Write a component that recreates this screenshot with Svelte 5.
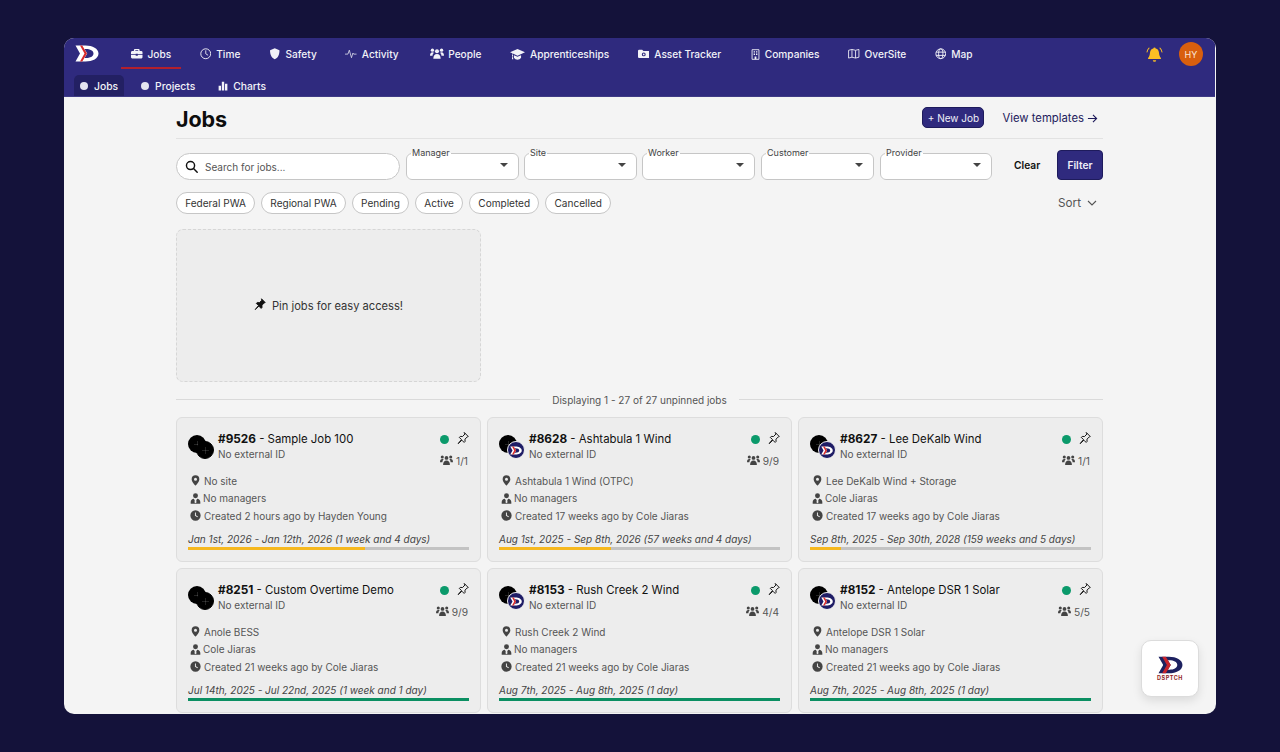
<script>
  const nav = [
    { label: 'Jobs', icon: 'briefcase', active: true },
    { label: 'Time', icon: 'clock' },
    { label: 'Safety', icon: 'shield' },
    { label: 'Activity', icon: 'activity' },
    { label: 'People', icon: 'people' },
    { label: 'Apprenticeships', icon: 'cap' },
    { label: 'Asset Tracker', icon: 'folder' },
    { label: 'Companies', icon: 'building' },
    { label: 'OverSite', icon: 'map' },
    { label: 'Map', icon: 'globe' }
  ];
  const filters = ['Manager', 'Site', 'Worker', 'Customer', 'Provider'];
  const chips = ['Federal PWA', 'Regional PWA', 'Pending', 'Active', 'Completed', 'Cancelled'];
  const jobs = [
    { id: '#9526', name: 'Sample Job 100', crew: '1/1', site: 'No site', mgr: 'No managers', created: 'Created 2 hours ago by Hayden Young', dates: 'Jan 1st, 2026 - Jan 12th, 2026 (1 week and 4 days)', pct: 63, color: '#f6b81f', logo: false },
    { id: '#8628', name: 'Ashtabula 1 Wind', crew: '9/9', site: 'Ashtabula 1 Wind (OTPC)', mgr: 'No managers', created: 'Created 17 weeks ago by Cole Jiaras', dates: 'Aug 1st, 2025 - Sep 8th, 2026 (57 weeks and 4 days)', pct: 40, color: '#f6b81f', logo: true },
    { id: '#8627', name: 'Lee DeKalb Wind', crew: '1/1', site: 'Lee DeKalb Wind + Storage', mgr: 'Cole Jiaras', created: 'Created 17 weeks ago by Cole Jiaras', dates: 'Sep 8th, 2025 - Sep 30th, 2028 (159 weeks and 5 days)', pct: 11, color: '#f6b81f', logo: true },
    { id: '#8251', name: 'Custom Overtime Demo', crew: '9/9', site: 'Anole BESS', mgr: 'Cole Jiaras', created: 'Created 21 weeks ago by Cole Jiaras', dates: 'Jul 14th, 2025 - Jul 22nd, 2025 (1 week and 1 day)', pct: 100, color: '#0b8f62', logo: false },
    { id: '#8153', name: 'Rush Creek 2 Wind', crew: '4/4', site: 'Rush Creek 2 Wind', mgr: 'No managers', created: 'Created 21 weeks ago by Cole Jiaras', dates: 'Aug 7th, 2025 - Aug 8th, 2025 (1 day)', pct: 100, color: '#0b8f62', logo: true },
    { id: '#8152', name: 'Antelope DSR 1 Solar', crew: '5/5', site: 'Antelope DSR 1 Solar', mgr: 'No managers', created: 'Created 21 weeks ago by Cole Jiaras', dates: 'Aug 7th, 2025 - Aug 8th, 2025 (1 day)', pct: 100, color: '#0b8f62', logo: true }
  ];
</script>

{#snippet icon(name)}
  <svg class="ico i-{name}" viewBox="0 0 16 16" aria-hidden="true">
    {#if name === 'briefcase'}
      <path fill="currentColor" d="M5.500 1.500h5A1.500 1.500 0 0 1 12 3v1h2a2 2 0 0 1 2 2v2.600H9.500V8h-3v.6H0V6a2 2 0 0 1 2-2h2V3a1.500 1.500 0 0 1 1.500-1.500zM6 3v1h4V3zM0 9.800h6.500v1h3v-1H16V13a1.500 1.500 0 0 1-1.500 1.500h-13A1.500 1.500 0 0 1 0 13z"/>
    {:else if name === 'clock'}
      <circle cx="8" cy="8" r="6.900" fill="none" stroke="currentColor" stroke-width="1.300"/><path d="M8 3.800V8l2.800 1.800" fill="none" stroke="currentColor" stroke-width="1.200" stroke-linecap="round"/>
    {:else if name === 'shield'}
      <path fill="currentColor" d="M8 .5 14.500 3c.2 5.500-1.400 10-6.500 12.500C2.900 13 1.300 8.500 1.500 3z"/>
    {:else if name === 'activity'}
      <path d="M.5 8.500h3.500L6 3l3 10.500L11 7l1 1.500h3.500" fill="none" stroke="currentColor" stroke-width="1" stroke-linejoin="round" stroke-linecap="round"/>
    {:else if name === 'people'}
      <g fill="currentColor"><circle cx="8" cy="4.800" r="2.300"/><circle cx="2.800" cy="3.600" r="1.900"/><circle cx="13.200" cy="3.600" r="1.900"/><path d="M3.800 13.500c0-3.600 1.600-5.500 4.200-5.500s4.200 1.900 4.200 5.500zM0 10C0 7.400 1 6 2.800 6c.7 0 1.300.2 1.700.6-1 1-1.500 2-1.600 3.400H0zM16 10c0-2.600-1-4-2.800-4-.7 0-1.300.2-1.700.6 1 1 1.500 2 1.600 3.400H16z"/></g>
    {:else if name === 'cap'}
      <path fill="currentColor" d="M8 2 0 5.500l2.500 1.200v1.900c-.5.3-.5 1 0 1.300L2 13h1.500l-.5-3.100c.5-.3.500-1 0-1.300V7l5 2.300 8-3.800zM4.200 8.700v2.700C5 12.700 6.500 13.500 8 13.500s3-.8 3.800-2.100V8.700L8 10.500z"/>
    {:else if name === 'folder'}
      <path fill="currentColor" fill-rule="evenodd" d="M1.500 2.500h4.300L7.500 4h7A1.500 1.500 0 0 1 16 5.500v7a1.500 1.500 0 0 1-1.500 1.500h-13A1.500 1.500 0 0 1 0 12.500V4a1.500 1.500 0 0 1 1.500-1.500zM8 6.200a2.700 2.700 0 1 0 0 5.400 2.700 2.700 0 0 0 0-5.400zm0 1.500a1.200 1.200 0 1 1 0 2.400 1.200 1.200 0 0 1 0-2.400z"/>
    {:else if name === 'building'}
      <path fill="none" stroke="currentColor" stroke-width="1.300" d="M3 1h10v14H3z"/><path fill="currentColor" d="M5.300 3.200h2v2h-2zM8.700 3.200h2v2h-2zM5.300 6.600h2v2h-2zM8.700 6.600h2v2h-2zM6.700 11h2.600v4H6.700z"/>
    {:else if name === 'map'}
      <path fill="none" stroke="currentColor" stroke-width="1.200" stroke-linejoin="round" d="M.8 3.200 5.500 2l5 1.200 4.700-1.200v10.800L10.500 14l-5-1.200L.8 14zM5.500 2v10.800M10.500 3.200V14"/>
    {:else if name === 'globe'}
      <g fill="none" stroke="currentColor" stroke-width="1.300"><circle cx="8" cy="8" r="6.800"/><ellipse cx="8" cy="8" rx="3" ry="6.800"/><path d="M1.500 5.700h13M1.500 10.300h13"/></g>
    {:else if name === 'pin'}
      <path fill="none" stroke="currentColor" stroke-width="1.300" stroke-linejoin="round" stroke-linecap="round" d="M10 1l5 5-1.300.5-3 3 .0 3.200-1.200 1.200-3-3-5 4.600L6 10 3 7.200l1.300-1.300 3.100.1 2.900-3z"/>
    {:else if name === 'pinSolid'}
      <path fill="currentColor" stroke="currentColor" stroke-width="1.100" stroke-linejoin="round" d="M10 1l5 5-1.300.5-3 3 .0 3.200-1.200 1.200-3-3-5 4.600L6 10 3 7.200l1.300-1.300 3.100.1 2.900-3z"/>
    {:else if name === 'marker'}
      <path fill="currentColor" fill-rule="evenodd" d="M8 .5a5.600 5.600 0 0 1 5.600 5.600C13.600 10 8 15.500 8 15.500S2.400 10 2.400 6.100A5.600 5.600 0 0 1 8 .5zm0 3.400a2.200 2.200 0 1 0 0 4.400 2.200 2.200 0 0 0 0-4.400z"/>
    {:else if name === 'tie'}
      <path fill="currentColor" d="M8 .5a3.600 3.600 0 1 1 0 7.200A3.600 3.600 0 0 1 8 .5zM1 15.500v-2.300C1 10.400 3 8.600 5.700 8.500L7 11.300l-.6 2.200L8 15l1.600-1.500-.6-2.200 1.300-2.800c2.700.1 4.700 1.900 4.700 4.700v2.300z"/>
    {:else if name === 'clockSolid'}
      <path fill="currentColor" fill-rule="evenodd" d="M8 .5a7.500 7.500 0 1 1 0 15 7.500 7.500 0 0 1 0-15zM7.200 3.500v5l3.600 2.200.8-1.200-3-1.800V3.500z"/>
    {:else if name === 'search'}
      <g fill="none" stroke="currentColor" stroke-width="1.800"><circle cx="6.800" cy="6.800" r="5"/><path d="m10.500 10.500 4.500 4.500" stroke-linecap="round"/></g>
    {:else if name === 'chart'}
      <path fill="currentColor" d="M1 7.500h3.800V15H1zM6.100 1h3.800v14H6.100zM11.200 4.500H15V15h-3.800z"/>
    {/if}
  </svg>
{/snippet}

{#snippet logoMark(main, chev, thin)}
  <svg class="logo" viewBox="0 0 48 34" aria-hidden="true">
    <path fill={main} d="M1 1h20c14 0 26 6 26 16S35 33 21 33H1l9-16zm18 7 5.500 9L19 26h3c8 0 15-3 15-9s-7-9-15-9z"/>
    {#if thin}
      <path fill={chev} d="M10 1h4.500l9.500 16-9.500 16H10l9-16z"/>
    {:else}
      <path fill={chev} d="M8 1h7l9.500 16L15 33H8l9-16z"/>
    {/if}
  </svg>
{/snippet}

<div class="window">
  <header>
    <div class="top">
      <span class="brand">{@render logoMark('#ffffff', '#d62b2b', true)}</span>
      <nav>
        {#each nav as item}
          <span class="nav-item" class:active={item.active}>{@render icon(item.icon)}{item.label}</span>
        {/each}
      </nav>
      <div class="right">
        <svg class="bell" viewBox="0 0 18 18" aria-hidden="true">
          <path fill="#fbbf24" d="M9 1.500a1.200 1.200 0 0 1 1.200 1.200c2.400.5 3.400 2.400 3.600 4.800.2 2.400.8 3.800 2 5.200v1H2.200v-1c1.200-1.400 1.800-2.800 2-5.200.2-2.400 1.200-4.300 3.600-4.800A1.200 1.200 0 0 1 9 1.500zM7.200 15h3.600a1.800 1.800 0 0 1-3.600 0z"/>
          <path fill="none" stroke="#fbbf24" stroke-width="1.100" stroke-linecap="round" d="M3.200 2.200C2 3.300 1.300 4.700 1.100 6.300M14.800 2.200c1.200 1.100 1.900 2.500 2.100 4.100"/>
        </svg>
        <span class="avatar">HY</span>
      </div>
    </div>
    <div class="sub">
      <span class="tab current"><i class="dot"></i>Jobs</span>
      <span class="tab"><i class="dot"></i>Projects</span>
      <span class="tab">{@render icon('chart')}Charts</span>
    </div>
  </header>

  <main>
    <div class="title-row">
      <h1>Jobs</h1>
      <div class="title-actions">
        <button class="new">+ New Job</button>
        <span class="templates">View templates
          <svg viewBox="0 0 12 12" aria-hidden="true"><path d="M1 6h9.500M6.500 2l4 4-4 4" fill="none" stroke="currentColor" stroke-width="1.200"/></svg>
        </span>
      </div>
    </div>

    <div class="filter-row">
      <div class="search">{@render icon('search')}<span>Search for jobs...</span></div>
      {#each filters as f}
        <fieldset class="select"><legend>{f}</legend><i class="caret"></i></fieldset>
      {/each}
      <span class="clear">Clear</span>
      <button class="apply">Filter</button>
    </div>

    <div class="chip-row">
      {#each chips as c}<span class="chip">{c}</span>{/each}
      <span class="sort">Sort
        <svg viewBox="0 0 12 12" aria-hidden="true"><path d="m2 4 4 4 4-4" fill="none" stroke="currentColor" stroke-width="1.100"/></svg>
      </span>
    </div>

    <div class="pin-grid">
      <div class="pin-box">{@render icon('pinSolid')}<span>Pin jobs for easy access!</span></div>
    </div>

    <div class="sep"><span>Displaying 1 - 27 of 27 unpinned jobs</span></div>

    <div class="cards">
      {#each jobs as j}
        <article>
          <div class="head">
            <div class="avatars">
              <i class="av black"></i>
              {#if j.logo}
                <i class="av second blue">{@render logoMark('#ffffff', '#d62b2b', false)}</i>
              {:else}
                <i class="av second black"></i>
              {/if}
            </div>
            <div class="names">
              <div class="name"><b>{j.id}</b> - {j.name}</div>
              <div class="ext">No external ID</div>
            </div>
            <div class="status">
              <div class="status-top"><i class="live"></i>{@render icon('pin')}</div>
              <div class="crew">{@render icon('people')}{j.crew}</div>
            </div>
          </div>
          <div class="rows">
            <div class="row">{@render icon('marker')}{j.site}</div>
            <div class="row tight">{@render icon('tie')}{j.mgr}</div>
            <div class="row">{@render icon('clockSolid')}{j.created}</div>
          </div>
          <div class="dates">{j.dates}</div>
          <div class="bar"><div class="fill" style="width:{j.pct}%;background:{j.color}"></div></div>
        </article>
      {/each}
    </div>
  </main>

  <div class="float">
    {@render logoMark('#1d2160', '#c8232c', false)}
    <span>DSPTCH</span>
  </div>
</div>

<style>
  :global(body) {
    margin: 0;
    background: #14123a;
    font-family: Inter, "Liberation Sans", sans-serif;
  }
  .window {
    position: relative;
    width: 1152px;
    height: 676px;
    margin: 38px 64px;
    background: #f4f4f4;
    border-radius: 10px;
    overflow: hidden;
  }
  header {
    height: 59px;
    background: #2f2a7e;
    color: #f2f2f8;
    margin-right: 1px;
    border-bottom: 1px solid #3f3b85;
    box-sizing: border-box;
  }
  .top {
    display: flex;
    align-items: flex-start;
    height: 37px;
    padding-left: 11px;
  }
  .brand { width: 24px; height: 17px; margin-top: 7px; margin-right: 22px; }
  .brand .logo { width: 24px; height: 17px; display: block; }
  nav { display: flex; gap: 8.600px; }
  .nav-item {
    display: flex;
    align-items: center;
    gap: 5px;
    height: 31px;
    padding: 3px 10px 0;
    font-size: 10.150px;
    font-weight: 500;
    white-space: nowrap;
    box-sizing: border-box;
    border-bottom: 2px solid transparent;
  }
  .nav-item:nth-child(4) { margin-right: 3px; }
  .nav-item.active { border-bottom-color: #b3202c; }
  .ico { width: 11px; height: 11px; flex: none; display: block; }
  .nav-item .ico { width: 11.500px; height: 11.500px; }
  .nav-item .i-people { width: 14px; height: 14px; margin-right: -1px; }
  .nav-item .i-cap { width: 15px; height: 15px; }
  .nav-item .i-building { width: 11px; height: 11px; margin-right: -1px; }
  .right { margin-left: auto; display: flex; align-items: center; gap: 16px; height: 32px; margin-right: 12px; }
  .bell { width: 17px; height: 17px; }
  .avatar {
    width: 24px; height: 24px; border-radius: 50%;
    background: #d95f0e; color: #f9e7d8;
    font-size: 9px; display: flex; align-items: center; justify-content: center;
  }
  .sub { display: flex; padding-left: 10px; height: 21px; }
  .tab {
    display: flex; align-items: center; gap: 5px;
    padding: 0 6px; margin-right: 11px;
    font-size: 10.300px; font-weight: 500;
    border-radius: 5px 5px 0 0;
  }
  .tab.current { background: #232063; }
  .tab .ico { width: 10px; height: 10px; }
  .dot { width: 8px; height: 8px; border-radius: 50%; background: #e4e4f0; display: block; margin-right: 1px; }

  main { width: 927px; margin-left: 112px; }
  .title-row {
    display: flex; align-items: center; justify-content: space-between;
    height: 42px; border-bottom: 1px solid #e2e2e2; box-sizing: border-box;
  }
  h1 { margin: 5px 0 0; font-size: 21.500px; font-weight: 700; color: #0d0d0d; line-height: 1; letter-spacing: -0.1px; }
  .title-actions { display: flex; align-items: center; gap: 18px; padding-right: 5px; }
  .new {
    width: 62px; height: 21px; padding: 0;
    background: #2f2a7e; color: #f0f0f8; border: 1px solid #1e1b5c; border-radius: 5px;
    font: 400 10px Inter, sans-serif;
  }
  .templates { display: flex; align-items: center; gap: 3px; margin-top: 1px; font-size: 11.300px; color: #1e1b5c; }
  .templates svg { width: 11px; height: 11px; }

  .filter-row { display: flex; align-items: flex-start; margin-top: 11px; height: 31px; }
  .search {
    width: 224px; height: 27px; margin-top: 3px; box-sizing: border-box;
    display: flex; align-items: center; gap: 7px; padding-left: 8px;
    background: #fff; border: 1px solid #c6c6c6; border-radius: 14px;
    font-size: 10px; color: #555;
  }
  .search .ico { width: 13px; height: 13px; color: #111; }
  .select {
    position: relative;
    width: 113px; height: 33px; margin: -3px 0 0 6px; padding: 0 0 0 4px;
    box-sizing: border-box; min-width: 0;
    background: #fff;
    border: 1px solid #c6c6c6; border-radius: 6px;
  }
  .select:nth-of-type(2), .select:nth-of-type(3) { margin-left: 5px; }
  .select:nth-of-type(5) { width: 112px; }
  legend { font-size: 9px; line-height: 12px; padding: 0 1px; color: #444; }
  .caret {
    position: absolute; right: 10px; top: 4px;
    width: 0; height: 0;
    border-left: 4px solid transparent; border-right: 4px solid transparent; border-top: 4px solid #444;
  }
  .clear { margin-left: 22px; margin-top: 9px; font-size: 10.200px; font-weight: 600; color: #111; }
  .apply {
    margin-left: auto; width: 46px; height: 30px; padding: 0;
    background: #2f2a7e; color: #f0f0f8; border: 1px solid #1e1b5c; border-radius: 4px;
    font: 600 10.200px Inter, sans-serif;
  }

  .chip-row { display: flex; align-items: center; gap: 6px; margin-top: 11px; height: 22px; }
  .chip {
    height: 22px; box-sizing: border-box; padding: 0 8.200px;
    display: flex; align-items: center;
    background: #fff; border: 1px solid #c6c6c6; border-radius: 11px;
    font-size: 10.050px; color: #333; white-space: nowrap;
  }
  .sort { margin-left: auto; display: flex; align-items: center; gap: 5px; padding-right: 5px; font-size: 11.700px; color: #555; }
  .sort svg { width: 12px; height: 12px; }

  .pin-grid { margin-top: 15px; }
  .pin-box {
    width: 305px; height: 153px; box-sizing: border-box;
    display: flex; align-items: center; justify-content: center; gap: 6px;
    background: #ededed; border: 1px dashed #d6d6d6; border-radius: 7px;
    font-size: 11.150px; color: #333;
  }
  .pin-box .ico { width: 12px; height: 12px; color: #111; margin-top: -3px; }

  .sep { display: flex; align-items: center; gap: 12px; margin-top: 10px; height: 15px; font-size: 10px; color: #555; }
  .sep::before, .sep::after { content: ''; flex: 1; height: 1px; background: #dadada; }

  .cards { display: grid; grid-template-columns: repeat(3, 305px); gap: 6px; margin-top: 10px; }
  article {
    height: 145px; box-sizing: border-box;
    padding: 11px 11px 0 11px;
    background: #ededed; border: 1px solid #dddddd; border-radius: 6px;
  }
  .head { display: flex; height: 42px; padding-top: 1px; box-sizing: border-box; }
  .avatars { position: relative; width: 30px; height: 30px; flex: none; margin-top: 2px; }
  .av { position: absolute; display: block; border-radius: 50%; width: 18px; height: 18px; box-sizing: border-box; }
  .black {
    left: 0; top: 3px;
    background-color: #000;
    background-image: linear-gradient(rgba(255,255,255,.14), rgba(255,255,255,.14)), linear-gradient(rgba(255,255,255,.14), rgba(255,255,255,.14));
    background-size: 1px 7px, 7px 1px;
    background-position: center;
    background-repeat: no-repeat;
  }
  .second { left: 8px; top: 9px; border: 1px solid #f0f0f0; }
  .second.black { border-color: #000; }
  .blue { background: #1f1d66; display: flex; align-items: center; justify-content: center; }
  .av .logo { width: 12px; height: 9px; }
  .names { flex: 1; min-width: 0; }
  .name { font-size: 11.400px; line-height: 18px; color: #111; white-space: nowrap; }
  .name b { font-weight: 700; font-size: 11.800px; }
  .ext { font-size: 10px; line-height: 14px; margin-top: -1px; color: #555; }
  .status { display: flex; flex-direction: column; align-items: flex-end; margin-right: 1px; }
  .status-top { display: flex; align-items: center; gap: 8px; height: 18px; }
  .status-top .ico { width: 12px; height: 12px; color: #111; margin-right: -1px; margin-top: -2px; }
  .live { width: 9px; height: 9px; border-radius: 50%; background: #0b9a6b; display: block; margin-top: 1px; }
  .crew { display: flex; align-items: center; gap: 3px; margin-top: 6px; font-size: 10.200px; color: #555; }
  .crew .ico { width: 13px; height: 13px; color: #444; }
  .rows { margin-top: 1px; }
  .row { display: flex; align-items: center; gap: 3px; height: 17.500px; padding-left: 2px; font-size: 10px; color: #555; white-space: nowrap; }
  .row .ico { width: 11px; height: 11px; color: #444; }
  .row.tight { padding-left: 2px; gap: 2px; }
  .dates { margin-top: 8px; font-size: 10px; line-height: 13px; font-style: italic; color: #444; white-space: nowrap; }
  .bar { height: 3px; margin-top: 1px; background: #c3c3c3; }
  .fill { height: 100%; }

  .float {
    position: absolute; left: 1077px; top: 602px;
    width: 58px; height: 57px; box-sizing: border-box;
    display: flex; flex-direction: column; align-items: center; justify-content: center;
    background: #fff; border: 1px solid #dcdcdc; border-radius: 10px;
    box-shadow: 0 4px 10px rgba(0,0,0,.1);
  }
  .float .logo { width: 25px; height: 18px; }
  .float span { font-size: 5.500px; font-weight: 700; color: #8f1d26; letter-spacing: .5px; line-height: 6px; margin-top: 1px; }
</style>
